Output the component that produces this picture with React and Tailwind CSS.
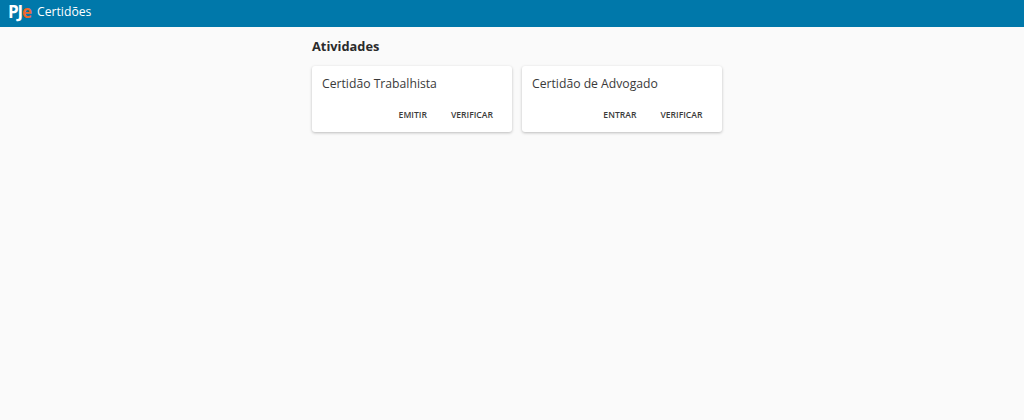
const font = "[font-family:'Open_Sans',sans-serif]"

function Card({ title, actions, className }) {
  return (
    <div className={`${className} h-[66px] bg-white rounded-[3px] shadow-[0_1px_3px_rgba(0,0,0,0.25)] flex flex-col`}>
      <div className="pl-[10px] pt-[8px] text-[12.2px] leading-[20px] text-[#3a3a3a]">{title}</div>
      <div className="mt-auto flex justify-end gap-[24px] pr-[19px] pb-[10px]">
        {actions.map((a) => (
          <button key={a} className="text-[8.6px] leading-[13px] font-semibold text-[#3a3a3a]">
            {a}
          </button>
        ))}
      </div>
    </div>
  )
}

export default function App() {
  return (
    <div className={`w-[1024px] h-[420px] overflow-hidden bg-[#fafafa] ${font}`}>
      <header className="h-[27px] bg-[#0078aa] flex items-center pl-[8px] pb-[4px]">
        <span className="w-[29px] text-[17px] leading-[20px] font-bold tracking-[-1.2px] text-white">
          PJ<span className="text-[#f0682c]">e</span>
        </span>
        <span className="text-[12.2px] leading-[16px] text-white">Certidões</span>
      </header>
      <main className="w-[410px] ml-[312px]">
        <h1 className="pt-[10px] h-[39px] text-[12.8px] leading-[18px] font-bold text-[#2b2b2b]">Atividades</h1>
        <div className="flex gap-[10px]">
          <Card className="w-[200px]" title="Certidão Trabalhista" actions={['EMITIR', 'VERIFICAR']} />
          <Card className="w-[199.5px]" title="Certidão de Advogado" actions={['ENTRAR', 'VERIFICAR']} />
        </div>
      </main>
    </div>
  )
}
